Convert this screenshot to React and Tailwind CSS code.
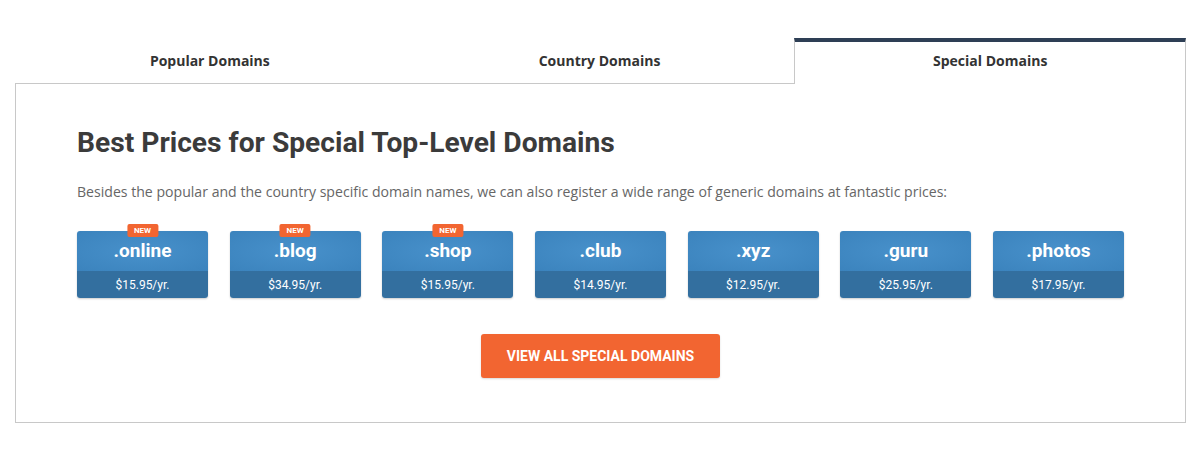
import React from "react";

const domains = [
  { name: ".online", price: "$15.95/yr.", isNew: true },
  { name: ".blog", price: "$34.95/yr.", isNew: true },
  { name: ".shop", price: "$15.95/yr.", isNew: true },
  { name: ".club", price: "$14.95/yr." },
  { name: ".xyz", price: "$12.95/yr." },
  { name: ".guru", price: "$25.95/yr." },
  { name: ".photos", price: "$17.95/yr." },
];

const tabs = ["Popular Domains", "Country Domains", "Special Domains"];

function DomainCard({ name, price, isNew }) {
  return (
    <div className="relative w-[131px]">
      {isNew && (
        <span className="absolute left-1/2 -translate-x-1/2 -top-[7px] bg-[#f26531] text-white text-[8px] leading-[13px] font-bold px-[7px] rounded-[2px] font-['Roboto',sans-serif]">
          NEW
        </span>
      )}
      <div className="rounded-[3px] overflow-hidden shadow-[0_1px_2px_rgba(0,0,0,0.2)] font-['Roboto',sans-serif] text-white text-center">
        <div className="h-[40px] flex items-center justify-center bg-[radial-gradient(ellipse_at_center,#4891cb_0%,#3b83bd_100%)] text-[19px] font-bold pt-[1px]">
          {name}
        </div>
        <div className="h-[27px] flex items-center justify-center bg-[#336f9f] text-[12px]">
          {price}
        </div>
      </div>
    </div>
  );
}

function App() {
  return (
    <div className="w-[1200px] h-[462px] bg-white pt-[38px] font-['Open_Sans',sans-serif]">
      <div className="mx-[15px] w-[1171px]">
        {/* Tabs */}
        <div className="flex">
          {tabs.map((t, i) => {
            const active = i === 2;
            return (
              <div
                key={t}
                className={
                  active
                    ? "flex-1 h-[46px] border-t-[4px] border-t-[#2e3f55] border-x border-x-[#c8c8c8] bg-white text-center text-[14px] font-bold text-[#333] pt-[8px] -mb-px relative z-10"
                    : "flex-1 h-[45px] text-center text-[14px] font-bold text-[#333] pt-[12px]"
                }
              >
                {t}
              </div>
            );
          })}
        </div>
        {/* Panel */}
        <div className="h-[340px] border border-[#c8c8c8] px-[61px] pt-[39px]">
          <h2 className="font-['Roboto',sans-serif] font-bold text-[28.2px] leading-[40px] text-[#3b3b3b]">
            Best Prices for Special Top-Level Domains
          </h2>
          <p className="mt-[19px] text-[14.1px] leading-[20px] text-[#666]">
            Besides the popular and the country specific domain names, we can also register a wide range of generic domains at fantastic prices:
          </p>
          <div className="mt-[29px] flex justify-between w-[1047px]">
            {domains.map((d) => (
              <DomainCard key={d.name} {...d} />
            ))}
          </div>
          <div className="flex justify-center mt-[36px] w-[1047px]">
            <button className="w-[239px] h-[44px] rounded-[3px] bg-[#f26531] text-white font-['Roboto',sans-serif] font-bold text-[14px] shadow-[0_1px_2px_rgba(0,0,0,0.15)]">
              VIEW ALL SPECIAL DOMAINS
            </button>
          </div>
        </div>
      </div>
    </div>
  );
}

export default App;
